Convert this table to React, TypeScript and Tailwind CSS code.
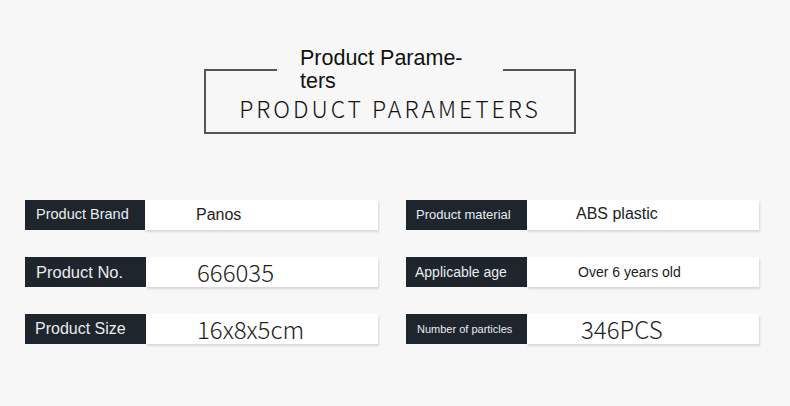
const rows = [
  [
    { label: 'Product Brand', labelSize: 'text-[14.5px] pl-[11px]', value: 'Panos', valueSize: 'text-[16px] pl-[51px] font-["Liberation_Sans",sans-serif]', w: 'w-[120px]' },
    { label: 'Product material', labelSize: 'text-[13px] pl-[10px]', value: 'ABS plastic', valueSize: 'text-[16px] pl-[49px] pb-[3px] font-["Liberation_Sans",sans-serif]', w: 'w-[121px]' },
  ],
  [
    { label: 'Product No.', labelSize: 'text-[16.5px] pl-[11px]', value: '666035', valueSize: 'text-[24px] pl-[51px] font-["Noto_Sans_CJK_SC",sans-serif] font-light', w: 'w-[121px]' },
    { label: 'Applicable age', labelSize: 'text-[14px] pl-[9px]', value: 'Over 6 years old', valueSize: 'text-[14px] pl-[51px] font-["Liberation_Sans",sans-serif]', w: 'w-[121px]' },
  ],
  [
    { label: 'Product Size', labelSize: 'text-[16px] pl-[10px]', value: '16x8x5cm', valueSize: 'text-[24px] pl-[51px] font-["Noto_Sans_CJK_SC",sans-serif] font-light', w: 'w-[121px]' },
    { label: 'Number of particles', labelSize: 'text-[11px] pl-[11px]', value: '346PCS', valueSize: 'text-[24px] pl-[54px] font-["Noto_Sans_CJK_SC",sans-serif] font-light', w: 'w-[121px]' },
  ],
];

function ParamRow({ item }: { item: (typeof rows)[0][0] }) {
  return (
    <div className="flex h-[30px] w-[353px]">
      {/* dark label cell */}
      <div
        className={`${item.w} ${item.labelSize} flex items-center bg-[#1e252c] text-[#e9ebec] font-["Liberation_Sans",sans-serif] whitespace-nowrap`}
      >
        {item.label}
      </div>
      {/* value cell */}
      <div
        className={`${item.valueSize} flex flex-1 items-center bg-white text-[#222] whitespace-nowrap shadow-[1px_2px_2px_rgba(0,0,0,0.13)]`}
      >
        {item.value}
      </div>
    </div>
  );
}

export default function App() {
  return (
    <div className="w-[790px] h-[406px] bg-[#f7f7f7] overflow-hidden">
      {/* Heading box */}
      <fieldset className="ml-[204px] mt-[47px] w-[372px] border-2 border-[#555] px-0 pb-0">
        <legend className="ml-[71px] w-[226px] pl-[23px] text-[21.5px] leading-[23px] text-[#111] font-['Liberation_Sans',sans-serif]">
          Product Parame-
          <br />
          ters
        </legend>
        <div className="h-[39px] pb-[10px] flex items-center justify-center text-[23px] leading-[24px] tracking-[3px] text-[#111] font-['Noto_Sans_CJK_SC',sans-serif] font-light">
          PRODUCT PARAMETERS
        </div>
      </fieldset>

      {/* Parameter rows */}
      <div className="mt-[66px] ml-[25px] flex flex-col gap-[27px]">
        {rows.map((pair, i) => (
          <div key={i} className="flex gap-[28px]">
            <ParamRow item={pair[0]} />
            <ParamRow item={pair[1]} />
          </div>
        ))}
      </div>
    </div>
  );
}
